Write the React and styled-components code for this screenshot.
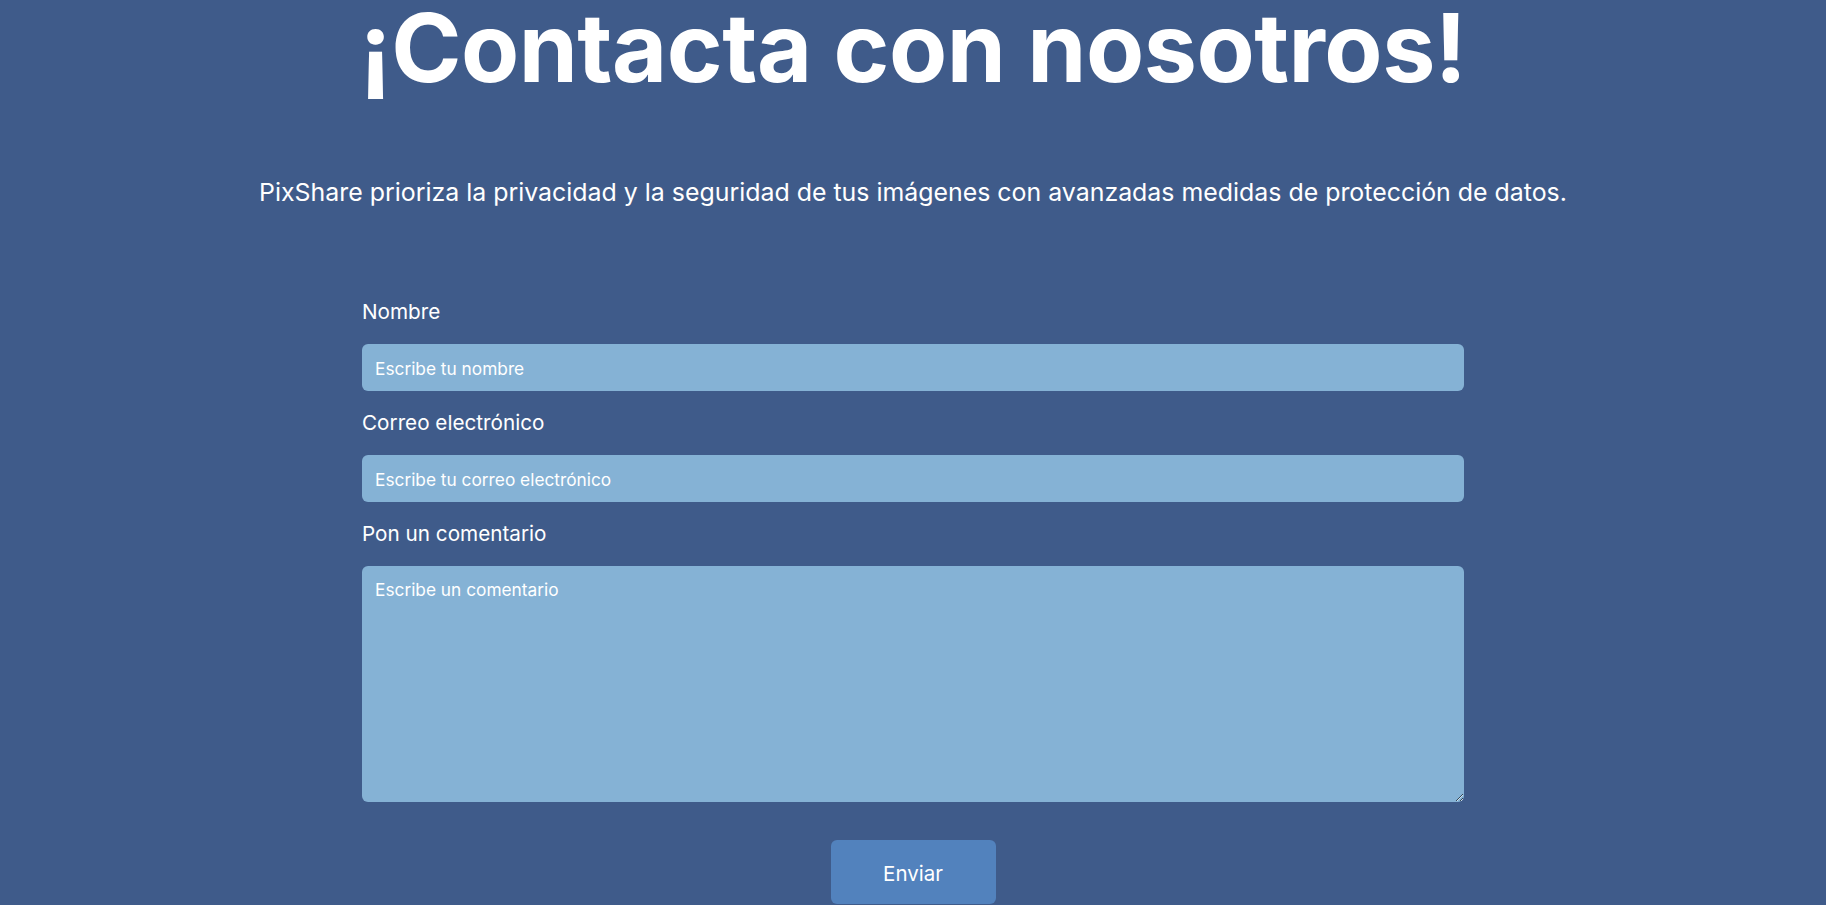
import React from 'react';
import styled, { createGlobalStyle } from 'styled-components';

const GlobalStyle = createGlobalStyle`
  html, body {
    margin: 0;
    padding: 0;
    background-color: #3f5b8a;
  }
  * {
    box-sizing: border-box;
  }
`;

const Page = styled.main`
  min-height: 100vh;
  display: flex;
  flex-direction: column;
  align-items: center;
  background-color: #3f5b8a;
  color: #fff;
  font-family: Inter, "Noto Sans", sans-serif;
`;

const Title = styled.h1`
  margin: 0;
  font-size: 95px;
  line-height: 96px;
  font-weight: 700;
  letter-spacing: -0.5px;
  text-align: center;
`;

const Subtitle = styled.p`
  margin: 82px 0 0;
  font-size: 24.9px;
  line-height: 29.4px;
  font-weight: 400;
  text-align: center;
`;

const Form = styled.form`
  width: 1102px;
  margin-top: 93px;
  display: flex;
  flex-direction: column;
  gap: 20px;
`;

const Field = styled.div`
  display: flex;
  flex-direction: column;
`;

const Label = styled.label`
  font-size: 20.7px;
  line-height: 24px;
  margin-bottom: 20px;
`;

const inputStyles = `
  width: 100%;
  border: none;
  border-radius: 6px;
  background-color: #85b2d5;
  color: #fff;
  font-family: Inter, "Noto Sans", sans-serif;
  font-size: 17.3px;
  outline: none;
  &::placeholder {
    color: #fff;
    opacity: 1;
  }
`;

const Input = styled.input`
  ${inputStyles}
  height: 47px;
  padding: 2px 13px 0;
`;

const TextArea = styled.textarea`
  ${inputStyles}
  height: 236px;
  padding: 14px 13px;
  line-height: 20px;
`;

const SubmitButton = styled.button`
  align-self: center;
  width: 165px;
  height: 64px;
  margin-top: 18px;
  border: none;
  border-radius: 6px;
  background-color: #5282bd;
  color: #fff;
  font-family: Inter, "Noto Sans", sans-serif;
  font-size: 20.5px;
  padding-top: 4px;
  cursor: pointer;
`;

const fields = [
  { id: 'nombre', label: 'Nombre', placeholder: 'Escribe tu nombre', type: 'text' },
  { id: 'correo', label: 'Correo electrónico', placeholder: 'Escribe tu correo electrónico', type: 'email' },
];

const App = () => (
  <Page>
    <GlobalStyle />
    <Title>¡Contacta con nosotros!</Title>
    <Subtitle>
      PixShare prioriza la privacidad y la seguridad de tus imágenes con avanzadas medidas de protección de datos.
    </Subtitle>
    <Form onSubmit={e => e.preventDefault()}>
      {fields.map(f => (
        <Field key={f.id}>
          <Label htmlFor={f.id}>{f.label}</Label>
          <Input id={f.id} type={f.type} placeholder={f.placeholder} />
        </Field>
      ))}
      <Field>
        <Label htmlFor="comentario">Pon un comentario</Label>
        <TextArea id="comentario" placeholder="Escribe un comentario" />
      </Field>
      <SubmitButton type="submit">Enviar</SubmitButton>
    </Form>
  </Page>
);

export default App;
